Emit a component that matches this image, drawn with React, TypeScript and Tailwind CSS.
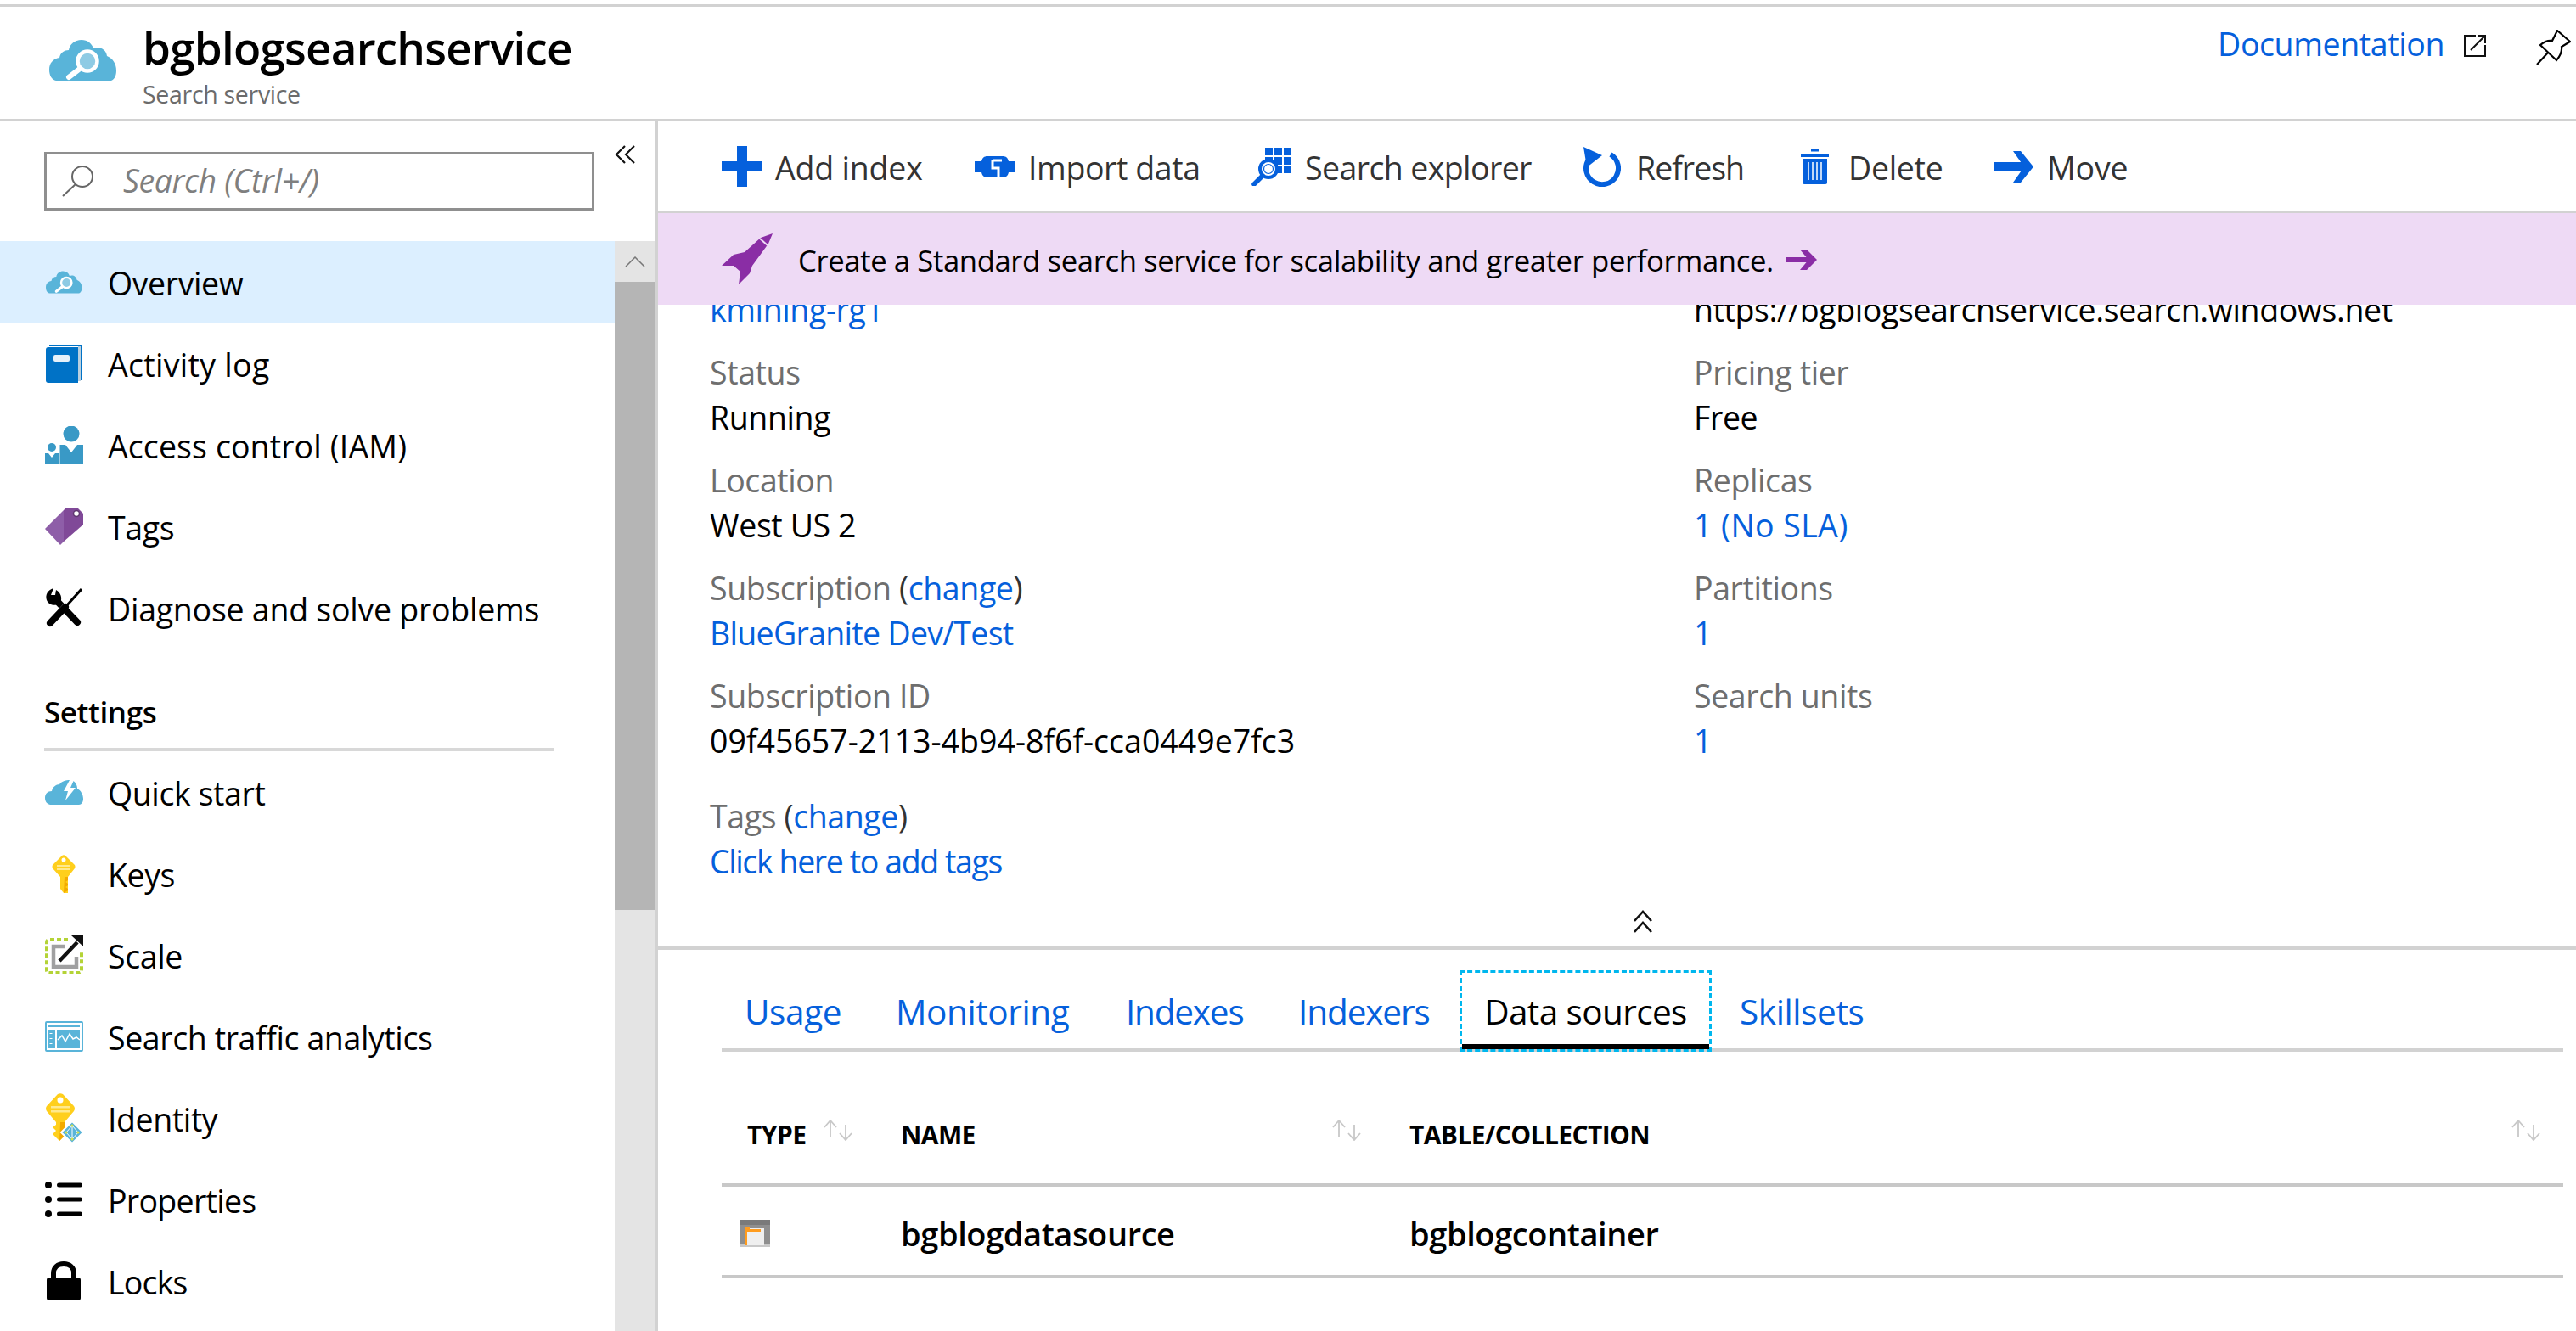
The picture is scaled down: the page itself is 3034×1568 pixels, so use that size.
const blue = "#0560dc";
const sky = "#59b4d9";

function CloudSearch({ className }: { className: string }) {
  return (
    <svg viewBox="0 0 80 48" className={className}>
      <path fill={sky} d="M8 48C3 47 0 42 0 35C0 27 5 22 12 21C13 15 18 12 23 12C24 5 30 0 38 0C45 0 50 4 52 10C59 7 67 11 68 19C75 22 79 28 79 36C79 42 77 46 73 48Z" />
      <circle cx="45" cy="25" r="11.5" fill="#8ecbe4" stroke="#fff" strokeWidth="4.5" />
      <path d="M36 34L23 44" stroke="#fff" strokeWidth="6" strokeLinecap="round" />
    </svg>
  );
}

function BookIcon() {
  return (
    <svg viewBox="0 0 43 45" className="h-[45px] w-[43px]">
      <path fill="#0072c6" d="M4 0H43V42H40V2H4Z" />
      <rect x="38" y="2" width="3" height="41" fill="#b9cfdf" />
      <path fill="#0072c6" d="M3 3H38V45H3Q0 45 0 42V6Q0 3 3 3Z" />
      <rect x="9" y="12" width="19" height="8" rx="2" fill="#e6f1fa" />
    </svg>
  );
}

function AccessIcon() {
  return (
    <svg viewBox="0 0 45 45" className="h-[45px] w-[45px]" fill="#3999c6">
      <circle cx="31" cy="9" r="9.5" />
      <path d="M17.500 22H24L31 31L38 22H45V45H17.500Z" />
      <circle cx="8" cy="25" r="5" />
      <path d="M0 32H4L8 37L12 32H16V45H0Z" />
    </svg>
  );
}

function TagIcon() {
  return (
    <svg viewBox="0 0 45 44" className="h-[44px] w-[45px]">
      <path fill="#8e5ea8" d="M0 25L22 3V40L18 44Z" />
      <path fill="#804998" d="M22 3L25 0H38L45 7V20L22 40Z" />
      <circle cx="37" cy="7" r="3.500" fill="#fff" stroke="#5f3670" strokeWidth="1.500" />
    </svg>
  );
}

function ToolsIcon() {
  return (
    <svg viewBox="0 0 44 46" className="h-[46px] w-[44px]">
      <path d="M10 0C3 2 0 8 2 14C4 19 10 21 16 19L19 14C20 9 17 4 13 2L12 8L7 8Z" />
      <path d="M15 16L38 40" stroke="#000" strokeWidth="8" strokeLinecap="round" />
      <path d="M42 2L7 40" stroke="#fff" strokeWidth="7.500" />
      <path d="M43 1L25 21" stroke="#000" strokeWidth="3" />
      <path d="M24 22L6 41" stroke="#000" strokeWidth="8" strokeLinecap="round" />
    </svg>
  );
}

function QuickIcon() {
  return (
    <svg viewBox="0 0 45 29" className="h-[29px] w-[45px]">
      <path fill={sky} d="M6 29C2 28 0 25 0 21C0 16 3 13 8 13C9 8 13 5 17 5C20 1 25 0 29 0C34 0 38 4 38 10C42 12 45 17 45 22C45 26 43 29 40 29Z" />
      <path fill="#fff" d="M29 0L22 13H27L24 24L36 9H30L34 0Z" />
    </svg>
  );
}

function KeyIcon() {
  return (
    <svg viewBox="0 0 28 45" className="h-[45px] w-[28px]">
      <path fill="#ffcf1c" d="M12 1Q14 -0.500 16 1L27 12Q28 14 27 16L19 26V45L14 45L10 40V26L1 16Q0 14 1 12Z" />
      <path fill="#f2aa00" d="M15 26H19V30L16 32L19 34V36L16 38L19 40V42L14 45Z" />
      <rect x="6" y="12" width="16" height="2" fill="#ffe98c" />
      <rect x="6" y="16" width="16" height="2" fill="#ffe98c" />
      <circle cx="14" cy="6" r="2.500" fill="#fff" />
    </svg>
  );
}

function ScaleIcon() {
  return (
    <svg viewBox="0 0 45 46" className="h-[46px] w-[45px]" fill="none">
      <path d="M27 5H5Q2 5 2 8V41Q2 44 5 44H40Q43 44 43 41V18" stroke="#b4d336" strokeWidth="4" strokeDasharray="5 3" />
      <path d="M24 13H10V37H37V25" stroke="#a0a0a1" strokeWidth="4.500" />
      <path d="M17 30L38 8" stroke="#111" strokeWidth="4.500" />
      <path fill="#111" d="M31 0H45V13Z" />
    </svg>
  );
}

function AnalyticsIcon() {
  return (
    <svg viewBox="0 0 45 36" className="h-[36px] w-[45px]">
      <rect x="1" y="1" width="43" height="34" rx="1" fill="#fff" stroke={sky} strokeWidth="2" />
      <rect x="4" y="4" width="37" height="3" fill={sky} />
      <rect x="4" y="10" width="8" height="22" fill={sky} />
      <rect x="14" y="10" width="27" height="22" fill={sky} />
      <path d="M7 14V15M7 20V21M7 26V27" stroke="#fff" strokeWidth="3" />
      <path d="M15 22L20 17L24 24L29 15L33 21L37 19L41 22" fill="none" stroke="#fff" strokeWidth="1.500" />
    </svg>
  );
}

function IdentityIcon() {
  return (
    <svg viewBox="0 0 45 59" className="h-[59px] w-[45px]">
      <path fill="#ffcf1c" d="M15 1Q18 -0.500 21 1L34 15Q36 18 34 21L23 34V50L17 56L9 48L13 44L9 40L13 37V34L2 21Q0 18 2 15Z" />
      <path fill="#f2aa00" d="M18 34H23V50L17 56Z" />
      <rect x="7" y="15" width="22" height="2.500" fill="#ffe98c" />
      <rect x="7" y="20" width="22" height="2.500" fill="#ffe98c" />
      <circle cx="18" cy="8" r="3.500" fill="#fff" />
      <path fill={sky} stroke="#fff" strokeWidth="2" d="M32 33L45 46L32 59L19 46Z" />
      <path fill="none" stroke="#fff" strokeWidth="1" d="M32 38V54M32 38L25 46L32 54L39 46Z" />
      <circle cx="32" cy="38" r="1.500" fill="#d7e34c" />
      <circle cx="25" cy="46" r="1.500" fill="#d7e34c" />
      <circle cx="39" cy="46" r="1.500" fill="#d7e34c" />
      <circle cx="32" cy="54" r="1.500" fill="#d7e34c" />
    </svg>
  );
}

function ListIcon() {
  return (
    <svg viewBox="0 0 44 44" className="h-[44px] w-[44px]" fill="#000">
      <circle cx="4" cy="5" r="4" />
      <circle cx="4" cy="22" r="4" />
      <circle cx="4" cy="39" r="4" />
      <rect x="14" y="2.500" width="30" height="5" rx="2.500" />
      <rect x="14" y="19.500" width="30" height="5" rx="2.500" />
      <rect x="14" y="36.500" width="30" height="5" rx="2.500" />
    </svg>
  );
}

function LockIcon() {
  return (
    <svg viewBox="0 0 40 46" className="h-[46px] w-[40px]">
      <path d="M8 20V14C8 7 13 3 20 3C27 3 32 7 32 14V20" fill="none" stroke="#000" strokeWidth="6" />
      <rect x="0" y="19" width="40" height="27" rx="3" />
    </svg>
  );
}

function SortIcon({ className }: { className: string }) {
  return (
    <svg viewBox="0 0 34 25" className={className} fill="none" stroke="#c8c8c8" strokeWidth="1.800">
      <path d="M8 20V1M1 9L8 1L15 9M26 6V24M19 16L26 24L33 16" />
    </svg>
  );
}

function ToolbarIcon({ name }: { name: string }) {
  if (name === "add")
    return (
      <svg viewBox="0 0 48 48" className="h-[48px] w-[48px]" fill={blue}>
        <path d="M18 0H30V18H48V30H30V48H18V30H0V18H18Z" />
      </svg>
    );
  if (name === "import")
    return (
      <svg viewBox="0 0 48 25" className="h-[25px] w-[48px]">
        <path fill={blue} d="M0 6H8C9 2 11 0 15 0H33C37 0 39 2 40 6H48V19H40C39 23 37 25 33 25H15C11 25 9 23 8 19H0Z" />
        <path d="M21 5H32M21 5V14H28V25" fill="none" stroke="#fff" strokeWidth="3" />
      </svg>
    );
  if (name === "explorer")
    return (
      <svg viewBox="0 0 47 45" className="h-[45px] w-[47px]" fill={blue}>
        <rect x="16" y="0" width="9" height="9" />
        <rect x="27" y="0" width="9" height="9" />
        <rect x="38" y="0" width="9" height="9" />
        <rect x="16" y="11" width="9" height="9" />
        <rect x="27" y="11" width="9" height="9" />
        <rect x="38" y="11" width="9" height="9" />
        <rect x="27" y="22" width="9" height="8" />
        <rect x="38" y="22" width="9" height="8" />
        <circle cx="20" cy="25" r="10" fill="#fff" stroke={blue} strokeWidth="4" />
        <circle cx="20" cy="25" r="5.500" fill="#fff" stroke={blue} strokeWidth="1.200" />
        <path d="M13 33L3 43" stroke={blue} strokeWidth="5.500" strokeLinecap="round" />
      </svg>
    );
  if (name === "refresh")
    return (
      <svg viewBox="0 0 45 47" className="h-[47px] w-[45px]" fill="none">
        <path d="M33 9A19 19 0 1 1 7 15" stroke={blue} strokeWidth="6" />
        <path fill={blue} d="M1 0L23 10L5 24Z" />
      </svg>
    );
  if (name === "delete")
    return (
      <svg viewBox="0 0 33 41" className="h-[41px] w-[33px]">
        <g fill={blue}>
          <rect x="12" y="0" width="9" height="2.500" />
          <rect x="0" y="5" width="33" height="4" />
          <path d="M2 11H31V39Q31 41 29 41H4Q2 41 2 39Z" />
        </g>
        <path d="M9 15V36M14 15V36M19 15V36M24 15V36" stroke="#fff" strokeWidth="1.500" />
      </svg>
    );
  return (
    <svg viewBox="0 0 47 37" className="h-[37px] w-[47px]" fill={blue}>
      <path d="M0 13H36V24H0Z" />
      <path d="M23 0H32L47 18.500L32 37H23L36 18.500Z" />
    </svg>
  );
}

const toolbar = [
  { id: "add", label: "Add index", cls: "ml-[75px] w-[298px] gap-[15px] tracking-[-0.2px]" },
  { id: "import", label: "Import data", cls: "w-[326px] gap-[15px] tracking-[-0.4px]" },
  { id: "explorer", label: "Search explorer", cls: "w-[390px] gap-[16px] tracking-[-0.6px]" },
  { id: "refresh", label: "Refresh", cls: "w-[257px] gap-[18px] tracking-[-1px]" },
  { id: "delete", label: "Delete", cls: "w-[227px] gap-[23px] tracking-[-0.3px]" },
  { id: "move", label: "Move", cls: "gap-[16px] tracking-[-0.2px]" },
];

const navTop = [
  { label: "Activity log", icon: <BookIcon />, cls: "tracking-[0.3px]" },
  { label: "Access control (IAM)", icon: <AccessIcon />, cls: "tracking-[0.1px]" },
  { label: "Tags", icon: <TagIcon /> },
  { label: "Diagnose and solve problems", icon: <ToolsIcon />, cls: "tracking-[-0.25px]" },
];

const navSettings = [
  { label: "Quick start", icon: <QuickIcon /> },
  { label: "Keys", icon: <KeyIcon /> },
  { label: "Scale", icon: <ScaleIcon /> },
  { label: "Search traffic analytics", icon: <AnalyticsIcon /> },
  { label: "Identity", icon: <IdentityIcon /> },
  { label: "Properties", icon: <ListIcon />, cls: "tracking-[-0.7px]" },
  { label: "Locks", icon: <LockIcon />, cls: "tracking-[-0.8px]" },
];

function NavRow({ label, icon, active, cls = "tracking-[-0.4px]" }: { label: string; icon: React.ReactNode; active?: boolean; cls?: string }) {
  return (
    <div className={"flex h-[96px] items-center pl-[52px] " + (active ? "bg-[#dcefff]" : "")}>
      <span className="flex w-[46px] shrink-0 justify-center">{icon}</span>
      <span className={"ml-[29px] pt-[5px] text-[37.500px] text-black " + cls}>{label}</span>
    </div>
  );
}

function Sidebar() {
  return (
    <aside className="flex w-[775px] shrink-0 flex-col overflow-hidden border-r-[3px] border-[#d2d2d2]">
      <div className="flex h-[141px] shrink-0">
        <div className="ml-[52px] mt-[36px] flex h-[69px] w-[648px] items-center border-[3px] border-[#8f8f8f] pl-[18px]">
          <svg viewBox="0 0 38 37" className="h-[37px] w-[38px]" fill="none" stroke="#666" strokeWidth="2">
            <circle cx="24" cy="13" r="12" />
            <path d="M16 22L1 36" />
          </svg>
          <span className="ml-[34px] text-[37.500px] italic tracking-[-0.4px] text-[#7f7f7f]">Search (Ctrl+/)</span>
        </div>
        <svg viewBox="0 0 25 22" className="ml-[24px] mt-[28px] h-[22px] w-[25px]" fill="none" stroke="#111" strokeWidth="2.200">
          <path d="M12 1L2 11L12 21M23 1L13 11L23 21" />
        </svg>
      </div>
      <div className="flex min-h-0 flex-1">
        <nav className="w-[724px] shrink-0">
          <NavRow label="Overview" active icon={<CloudSearch className="h-[27px] w-[43px]" />} />
          {navTop.map((item) => (
            <NavRow key={item.label} label={item.label} icon={item.icon} cls={item.cls} />
          ))}
          <div className="mx-[52px] flex h-[121px] w-[600px] items-end border-b-[4px] border-[#d8d8d8] pb-[25px] text-[35px] font-semibold leading-none tracking-[-0.4px] text-black">
            Settings
          </div>
          {navSettings.map((item) => (
            <NavRow key={item.label} label={item.label} icon={item.icon} cls={item.cls} />
          ))}
        </nav>
        <div className="flex w-[48px] shrink-0 flex-col bg-[#e4e4e4]">
          <div className="flex h-[48px] items-center justify-center">
            <svg viewBox="0 0 24 12" className="h-[12px] w-[24px]" fill="none" stroke="#777" strokeWidth="1.500">
              <path d="M1 12L12 1L23 12" />
            </svg>
          </div>
          <div className="h-[740px] bg-[#b5b5b5]" />
        </div>
      </div>
    </aside>
  );
}

function Field({ label, children, cls = "" }: { label: React.ReactNode; children: React.ReactNode; cls?: string }) {
  return (
    <div className={"mb-[25px] " + cls}>
      <div className="h-[51px] leading-[51px] text-[#6e6e6e]">{label}</div>
      <div className="h-[51px] pt-[2px] leading-[51px] text-black">{children}</div>
    </div>
  );
}

function Link({ children, cls = "" }: { children: React.ReactNode; cls?: string }) {
  return <span className={"text-[#0560dc] " + cls}>{children}</span>;
}

function Details() {
  return (
    <div className="h-[760px] shrink-0 overflow-hidden border-b-[4px] border-[#d2d2d2] text-[37.500px] tracking-[-0.4px]">
      <div className="-mt-[22px] flex pl-[61px]">
        <div className="w-[1159px]">
          <div className="mb-[25px] h-[51px] pt-[2px] leading-[51px]">
            <Link>kmining-rg1</Link>
          </div>
          <Field label="Status">Running</Field>
          <Field label="Location">West US 2</Field>
          <Field
            label={
              <>
                Subscription <span className="text-[#333]">(</span>
                <Link>change</Link>
                <span className="text-[#333]">)</span>
              </>
            }
          >
            <Link cls="tracking-[-0.7px]">BlueGranite Dev/Test</Link>
          </Field>
          <Field label="Subscription ID" cls="mb-[40px]">
            <span className="tracking-normal">09f45657-2113-4b94-8f6f-cca0449e7fc3</span>
          </Field>
          <Field
            label={
              <>
                Tags <span className="text-[#333]">(</span>
                <Link>change</Link>
                <span className="text-[#333]">)</span>
              </>
            }
            cls="mb-0"
          >
            <Link cls="tracking-[-1.4px]">Click here to add tags</Link>
          </Field>
        </div>
        <div className="flex-1">
          <div className="mb-[25px] h-[51px] whitespace-nowrap pt-[2px] leading-[51px] text-black">
            https://bgblogsearchservice.search.windows.net
          </div>
          <Field label="Pricing tier">Free</Field>
          <Field label="Replicas">
            <Link cls="tracking-[0.4px]">1 (No SLA)</Link>
          </Field>
          <Field label="Partitions">
            <Link>1</Link>
          </Field>
          <Field label="Search units">
            <Link>1</Link>
          </Field>
        </div>
      </div>
      <div className="mt-[8px] flex justify-center pl-[61px]">
        <svg viewBox="0 0 24 30" className="h-[30px] w-[24px]" fill="none" stroke="#111" strokeWidth="2.600">
          <path d="M2 14L12 3L22 14M2 27L12 16L22 27" />
        </svg>
      </div>
    </div>
  );
}

const tabs = [
  { label: "Usage", cls: "w-[178px] tracking-[-0.4px]" },
  { label: "Monitoring", cls: "w-[271px] tracking-[-0.4px]" },
  { label: "Indexes", cls: "w-[203px] tracking-[-1.2px]" },
  { label: "Indexers", cls: "w-[217px] tracking-[-1.1px]" },
];

function Tabs() {
  return (
    <div className="ml-[75px] flex h-[120px] w-[2169px] shrink-0 items-end border-b-[4px] border-[#d2d2d2] text-[40.500px]">
      {tabs.map((t) => (
        <div key={t.label} className={"flex h-[96px] items-center pl-[27px] pt-[10px] text-[#0560dc] " + t.cls}>
          {t.label}
        </div>
      ))}
      <div className="relative -mb-[4px] flex h-[96px] w-[297px] items-center justify-center border-[3px] border-dashed border-[#00b7ee] pt-[2px] tracking-[-0.6px] text-black">
        Data sources
        <div className="absolute bottom-0 left-0 right-0 h-[6px] bg-black" />
      </div>
      <div className="flex h-[96px] items-center pl-[33px] pt-[10px] tracking-[-0.4px] text-[#0560dc]">Skillsets</div>
    </div>
  );
}

function Table() {
  return (
    <div className="ml-[75px] w-[2169px] shrink-0 pt-[40px] text-black">
      <div className="grid h-[119px] grid-cols-[181px_599px_1fr] border-b-[4px] border-[#c8c8c8] text-[30px] font-bold tracking-[-0.6px]">
        {["TYPE", "NAME", "TABLE/COLLECTION"].map((h) => (
          <div key={h} className="flex items-center justify-between pl-[30px] pr-[27px]">
            {h}
            <SortIcon className="mb-[10px] h-[25px] w-[34px]" />
          </div>
        ))}
      </div>
      <div className="grid h-[108px] grid-cols-[181px_599px_1fr] border-b-[4px] border-[#c8c8c8] pt-[6px] text-[38px] font-semibold tracking-[-0.4px]">
        <div className="flex items-center pl-[21px]">
          <svg viewBox="0 0 36 32" className="h-[32px] w-[36px]">
            <rect width="36" height="32" fill="#8f8f8f" />
            <rect width="36" height="6" fill="#7a7a7a" />
            <rect y="28" width="36" height="4" fill="#c8c8c8" />
            <rect x="7" y="10" width="22" height="20" fill="#efefef" />
            <path fill="#ff9c1e" d="M7 9H12V11H25V14H9V30H7Z" />
          </svg>
        </div>
        <div className="flex items-center pl-[30px]">bgblogdatasource</div>
        <div className="flex items-center pl-[30px]">bgblogcontainer</div>
      </div>
    </div>
  );
}

export default function App() {
  return (
    <div className="flex h-[1568px] w-[3034px] flex-col overflow-hidden bg-white font-['Open_Sans',sans-serif]">
      <div className="mt-[5px] h-[3px] shrink-0 bg-[#d2d2d2]" />
      <header className="flex h-[135px] shrink-0 border-b-[3px] border-[#d2d2d2]">
        <CloudSearch className="ml-[58px] mt-[39px] h-[48px] w-[80px]" />
        <div className="ml-[30px] mt-[15px]">
          <div className="text-[53px] font-semibold leading-[66px] tracking-[-0.8px] text-black">bgblogsearchservice</div>
          <div className="mt-[2px] text-[28.500px] leading-[40px] tracking-[-0.3px] text-[#6b6b6b]">Search service</div>
        </div>
        <div className="ml-auto mr-[6px] mt-[19px] flex items-start">
          <span className="text-[37.500px] leading-[50px] tracking-[-0.4px] text-[#0560dc]">Documentation</span>
          <svg viewBox="0 0 26 26" className="ml-[23px] mt-[14px] h-[26px] w-[26px]" fill="none" stroke="#111" strokeWidth="2">
            <path d="M14 1H1V25H25V12M8 18L25 1M16 1H25V10" />
          </svg>
          <svg viewBox="0 0 41 41" className="ml-[59px] mt-[8px] h-[41px] w-[41px]" fill="none" stroke="#000" strokeWidth="2.200">
            <path d="M25 1L40 14L30 20Q31 28 24 36L5 18Q12 12 19 13Z" />
            <path d="M14 27L1 41" />
          </svg>
        </div>
      </header>
      <div className="flex min-h-0 flex-1">
        <Sidebar />
        <main className="flex min-w-0 flex-1 flex-col">
          <div className="flex h-[108px] shrink-0 items-center border-b-[3px] border-[#d2d2d2] pt-[1px]">
            {toolbar.map((b) => (
              <div key={b.id} className={"flex items-center text-[37.500px] text-[#333] " + b.cls}>
                <ToolbarIcon name={b.id} />
                <span className="pt-[4px]">{b.label}</span>
              </div>
            ))}
          </div>
          <div className="flex h-[108px] shrink-0 items-center bg-[#eedaf5] pl-[75px] text-[34.700px] tracking-[-0.4px] text-black">
            <svg viewBox="0 0 60 60" className="h-[60px] w-[60px]" fill="#8a2da5">
              <path d="M60 0L55 12L36 38L33 47L20 60L22 45L14 38H0L14 25L27 22L46 5Z" />
              <path d="M45 6L54 14" stroke="#eedaf5" strokeWidth="2" />
            </svg>
            <span className="ml-[30px] pt-[4px]">Create a Standard search service for scalability and greater performance.</span>
            <svg viewBox="0 0 36 24" className="ml-[15px] mt-[2px] h-[24px] w-[36px]" fill="#8a2da5">
              <path d="M0 9H26V15H0Z" />
              <path d="M16 0H24L36 12L24 24H16L26 12Z" />
            </svg>
          </div>
          <Details />
          <Tabs />
          <Table />
        </main>
      </div>
    </div>
  );
}
